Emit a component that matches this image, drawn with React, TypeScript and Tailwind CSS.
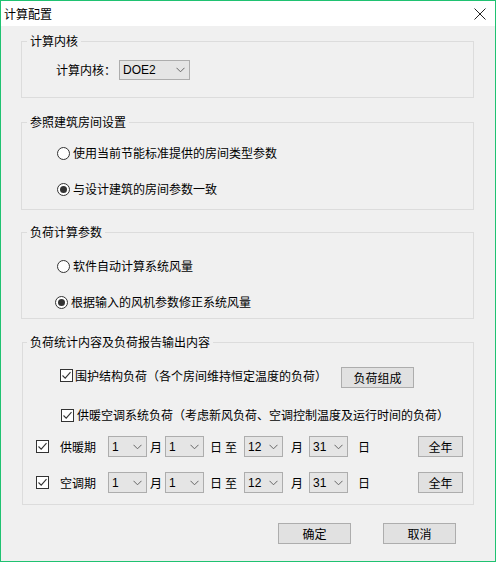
import React from "react";

const FONT = { fontFamily: '"Noto Sans CJK SC", "Microsoft YaHei", sans-serif' };

function Radio({ checked }: { checked?: boolean }) {
  return (
    <span className="w-[13px] h-[13px] rounded-full border border-[#333] bg-white flex items-center justify-center shrink-0">
      {checked && <span className="w-[7px] h-[7px] rounded-full bg-[#333]" />}
    </span>
  );
}

function Check() {
  return (
    <span className="w-[13px] h-[13px] border border-[#333] bg-white flex items-center justify-center shrink-0">
      <svg width="11" height="11" viewBox="0 0 11 11">
        <path d="M1.5 5.5 L4.2 8.2 L9.5 2.2" fill="none" stroke="#333" strokeWidth="1.1" />
      </svg>
    </span>
  );
}

function Select({ value, w, h }: { value: string; w: string; h: string }) {
  return (
    <div className={`${w} ${h} border border-[#adadad] bg-[#e5e5e5] flex items-center justify-between pl-[3px] pr-[4px] shrink-0`}>
      <span className="text-[12px] leading-none text-black" style={{ fontFamily: '"Liberation Sans", Arial, sans-serif' }}>{value}</span>
      <svg width="9" height="6" viewBox="0 0 9 6">
        <path d="M0.5 0.8 L4.5 4.8 L8.5 0.8" fill="none" stroke="#666" strokeWidth="1" />
      </svg>
    </div>
  );
}

function Button({ label, w, h }: { label: string; w: string; h: string }) {
  return (
    <div className={`${w} ${h} border border-[#adadad] bg-[#e1e1e1] flex items-center justify-center text-[12px] text-black shrink-0`}>
      {label}
    </div>
  );
}

function DateRow({ label, mt }: { label: string; mt: string }) {
  return (
    <div className={`flex items-center h-[21px] ${mt}`}>
      <span className="ml-[13px]"><Check /></span>
      <span className="ml-[11px] w-[36px]">{label}</span>
      <span className="ml-[12px]"><Select value="1" w="w-[39px]" h="h-[21px]" /></span>
      <span className="ml-[3px] w-[12px]">月</span>
      <span className="ml-[3px]"><Select value="1" w="w-[39px]" h="h-[21px]" /></span>
      <span className="ml-[6px] w-[12px]">日</span>
      <span className="ml-[3px] w-[12px]">至</span>
      <span className="ml-[7px]"><Select value="12" w="w-[39px]" h="h-[21px]" /></span>
      <span className="ml-[8px] w-[12px]">月</span>
      <span className="ml-[6px]"><Select value="31" w="w-[39px]" h="h-[21px]" /></span>
      <span className="ml-[10px] w-[12px]">日</span>
      <span className="ml-[48px]"><Button label="全年" w="w-[45px]" h="h-[21px]" /></span>
    </div>
  );
}

export default function App() {
  return (
    <div className="w-[496px] h-[562px] border border-[#1fc271] bg-[#f0f0f0] flex flex-col text-[12px] text-black overflow-hidden" style={FONT}>
      <div className="h-[25px] bg-white flex items-center justify-between shrink-0">
        <span className="ml-[3px] text-[12px] leading-none">计算配置</span>
        <svg className="mr-[9px]" width="12" height="12" viewBox="0 0 12 12">
          <path d="M0.5 0.5 L11.5 11.5 M11.5 0.5 L0.5 11.5" stroke="#222" strokeWidth="1" />
        </svg>
      </div>

      <div className="flex flex-col pl-[20px] pr-[21px] pt-[7px]">
        <fieldset className="h-[65px] border border-[#dcdcdc] px-0">
          <legend className="ml-[5px] px-[3px] leading-[16px]">计算内核</legend>
          <div className="flex items-center pl-[34px] pt-[11px]">
            <span>计算内核：</span>
            <span className="ml-[3px]"><Select value="DOE2" w="w-[71px]" h="h-[20px]" /></span>
          </div>
        </fieldset>

        <fieldset className="mt-[16px] h-[96px] border border-[#dcdcdc] px-0">
          <legend className="ml-[5px] px-[3px] leading-[16px]">参照建筑房间设置</legend>
          <div className="flex flex-col pl-[35px] pt-[15px] gap-[20px]">
            <div className="flex items-center h-[16px] gap-[3px]"><Radio /><span>使用当前节能标准提供的房间类型参数</span></div>
            <div className="flex items-center h-[16px] gap-[3px]"><Radio checked /><span>与设计建筑的房间参数一致</span></div>
          </div>
        </fieldset>

        <fieldset className="mt-[14px] h-[95px] border border-[#dcdcdc] px-0">
          <legend className="ml-[5px] px-[3px] leading-[16px]">负荷计算参数</legend>
          <div className="flex flex-col pl-[35px] pt-[18px] gap-[20px]">
            <div className="flex items-center h-[16px] gap-[3px]"><Radio /><span>软件自动计算系统风量</span></div>
            <div className="flex items-center h-[16px] gap-[3px] -ml-[2px]"><Radio checked /><span>根据输入的风机参数修正系统风量</span></div>
          </div>
        </fieldset>

        <fieldset className="mt-[15px] h-[171px] border border-[#dcdcdc] px-0 ml-[1px]">
          <legend className="ml-[4px] px-[3px] leading-[16px]">负荷统计内容及负荷报告输出内容</legend>
          <div className="flex flex-col pt-[17px]">
            <div className="flex items-center h-[21px] pl-[37px]">
              <span className="-mt-[4px] w-[262px] flex items-center gap-[2px] whitespace-nowrap"><Check /><span>围护结构负荷（各个房间维持恒定温度的负荷）</span></span>
              <span className="ml-[19px]"><Button label="负荷组成" w="w-[73px]" h="h-[21px]" /></span>
            </div>
            <div className="flex items-center h-[16px] mt-[19px] pl-[38px] gap-[3px] whitespace-nowrap">
              <Check /><span>供暖空调系统负荷（考虑新风负荷、空调控制温度及运行时间的负荷）</span>
            </div>
            <DateRow label="供暖期" mt="mt-[13px]" />
            <DateRow label="空调期" mt="mt-[15px]" />
          </div>
        </fieldset>

        <div className="flex mt-[18px] pl-[257px] gap-[32px]">
          <Button label="确定" w="w-[73px]" h="h-[21px]" />
          <Button label="取消" w="w-[73px]" h="h-[21px]" />
        </div>
      </div>
    </div>
  );
}
